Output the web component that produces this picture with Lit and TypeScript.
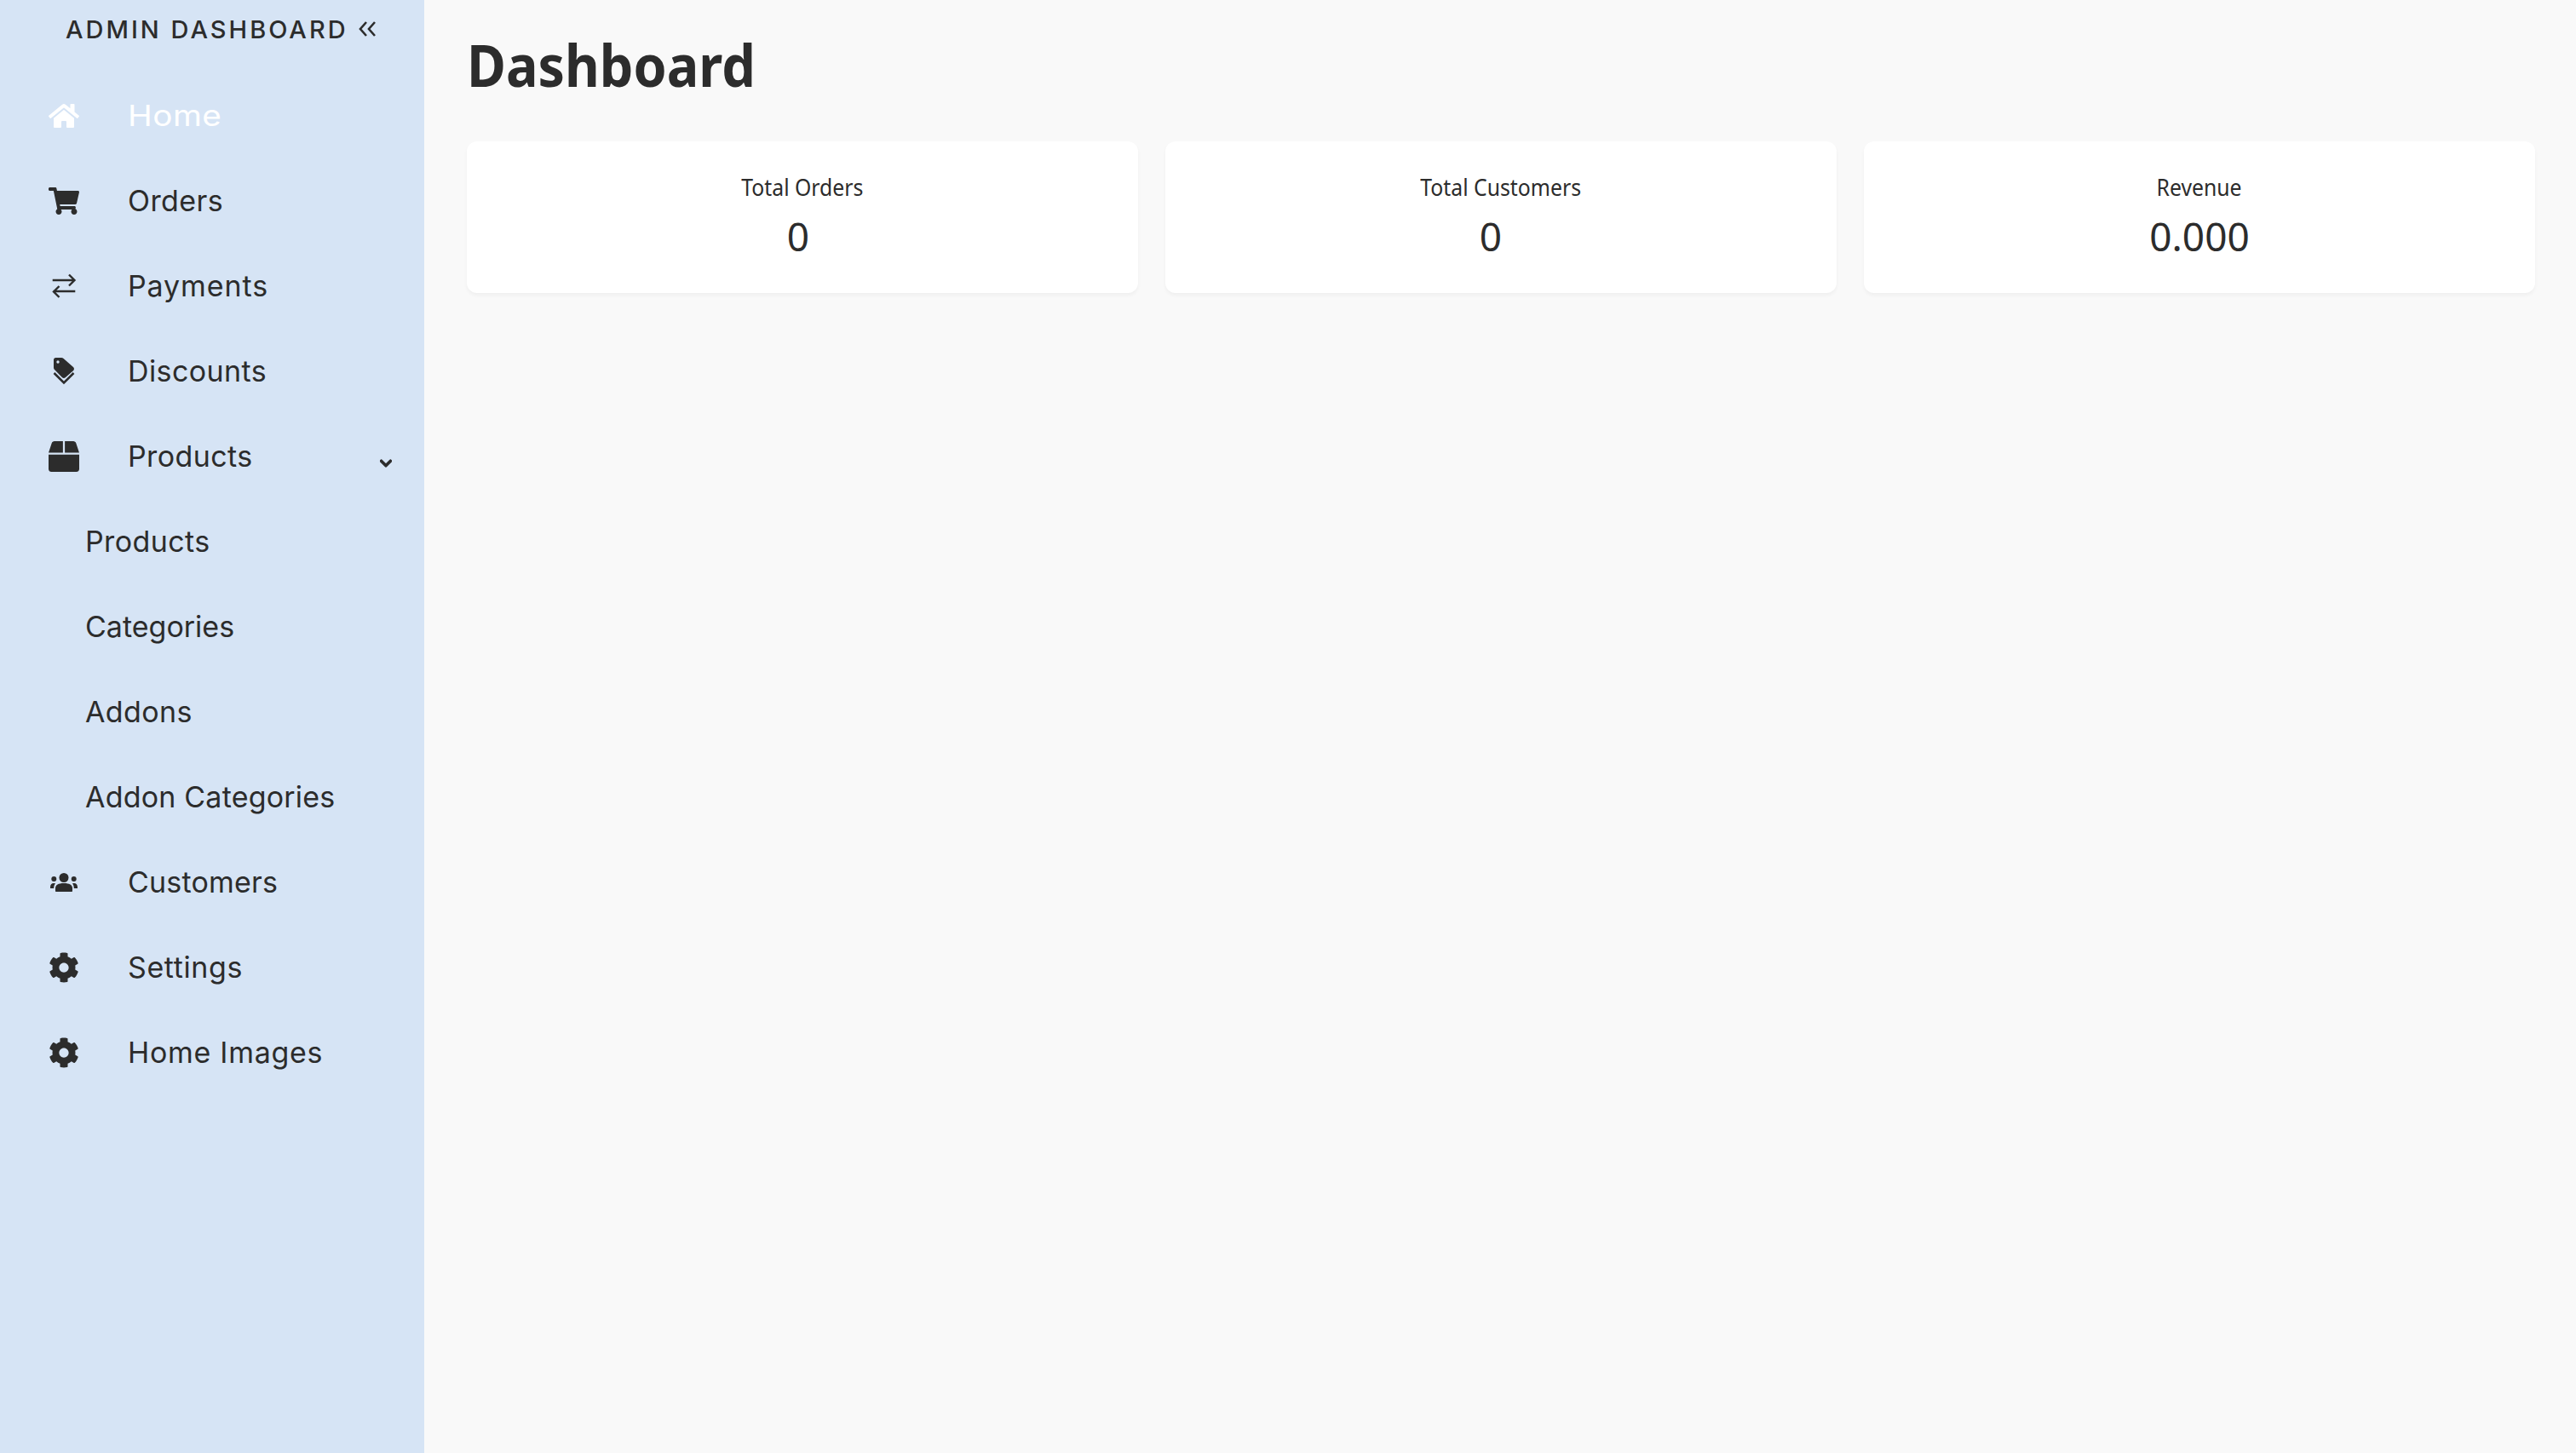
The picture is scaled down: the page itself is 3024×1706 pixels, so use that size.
import { LitElement, html, css } from "lit";
import { customElement } from "lit/decorators.js";

const icons: Record<string, unknown> = {
  home: html`<svg viewBox="0 0 576 512"><path d="M280.37 148.26L96 300.11V464a16 16 0 0 0 16 16l112.06-.29a16 16 0 0 0 15.92-16V368a16 16 0 0 1 16-16h64a16 16 0 0 1 16 16v95.64a16 16 0 0 0 16 16.05L464 480a16 16 0 0 0 16-16V300L295.67 148.26a12.19 12.19 0 0 0-15.3 0zM571.6 251.47L488 182.56V44.05a12 12 0 0 0-12-12h-56a12 12 0 0 0-12 12v72.61L318.47 43a48 48 0 0 0-61 0L4.34 251.47a12 12 0 0 0-1.6 16.9l25.5 31A12 12 0 0 0 45.15 301l235.22-193.74a12.19 12.19 0 0 1 15.3 0L530.9 301a12 12 0 0 0 16.9-1.6l25.5-31a12 12 0 0 0-1.7-16.93z"/></svg>`,
  cart: html`<svg viewBox="0 0 576 512"><path d="M528.12 301.319l47.273-208C578.806 78.301 567.391 64 551.99 64H159.208l-9.166-44.81C147.758 8.021 137.93 0 126.529 0H24C10.745 0 0 10.745 0 24v16c0 13.255 10.745 24 24 24h69.883l70.248 343.435C147.325 417.1 136 435.222 136 456c0 30.928 25.072 56 56 56s56-25.072 56-56c0-15.674-6.447-29.835-16.824-40h209.647C430.447 426.165 424 440.326 424 456c0 30.928 25.072 56 56 56s56-25.072 56-56c0-22.172-12.888-41.332-31.579-50.405l5.517-24.276c3.413-15.018-8.002-29.319-23.403-29.319H218.117l-6.545-32h293.145c11.206 0 20.92-7.754 23.403-18.681z"/></svg>`,
  swap: html`<svg viewBox="0 0 36 36"><path d="M4.700 11H31M24 4.500 30.500 11 24 17.500M31.300 24H5.500M12.500 18 6 24.500 12.500 31" fill="none" stroke="currentColor" stroke-width="2.400"/></svg>`,
  tags: html`<svg viewBox="0 0 36 36"><path d="M6 4.500C6 3 7 2 8.500 2H15c1 0 1.900.4 2.600 1L29 13c1.300 1.200 1.300 3 0 4.200L20 25c-1.200 1.200-3 1.200-4.200 0L7 16c-.7-.6-1-1.500-1-2.500z"/><path d="M6.500 20 18 31.500 29.500 20" fill="none" stroke="currentColor" stroke-width="2.500"/><circle cx="11" cy="7" r="1.700" fill="#d6e4f5"/></svg>`,
  box: html`<svg viewBox="0 0 512 512"><path d="M509.5 184.6L458.9 32.8C452.4 13.2 434.1 0 413.4 0H272v192h238.7c-.4-2.5-.4-5-1.2-7.4zM240 0H98.6c-20.7 0-39 13.2-45.5 32.8L2.5 184.6c-.8 2.4-.8 4.9-1.2 7.4H240V0zM0 224v240c0 26.5 21.5 48 48 48h416c26.5 0 48-21.5 48-48V224H0z"/></svg>`,
  users: html`<svg viewBox="0 0 36 36"><circle cx="18" cy="12.500" r="5.500"/><circle cx="6.300" cy="14" r="3"/><circle cx="29.700" cy="14" r="3"/><path d="M8 28c0 .6.400 1 1 1h18c.6 0 1-.4 1-1v-3c0-4-3.500-6-10-6S8 21 8 25z"/><path d="M2 25v-1.500C2 21 3.500 19 6 19c.8 0 1.500.1 2 .4-1.200 1.300-1.800 3-1.800 5.600zM34 25v-1.500C34 21 32.500 19 30 19c-.8 0-1.500.1-2 .4 1.200 1.300 1.800 3 1.800 5.600z"/></svg>`,
  gear: html`<svg viewBox="0 0 512 512"><path d="M487.4 315.7l-42.6-24.6c4.3-23.2 4.3-47 0-70.2l42.6-24.6c4.9-2.8 7.1-8.6 5.5-14-11.1-35.6-30-67.8-54.7-94.6-3.8-4.1-10-5.1-14.8-2.3L380.8 110c-17.9-15.4-38.5-27.3-60.8-35.1V25.800c0-5.600-3.900-10.500-9.400-11.700-36.700-8.200-74.300-7.800-109.200 0-5.500 1.200-9.400 6.100-9.400 11.700V75c-22.200 7.900-42.800 19.800-60.800 35.100L88.700 85.500c-4.900-2.800-11-1.900-14.800 2.300-24.700 26.700-43.600 58.900-54.700 94.600-1.700 5.400.6 11.200 5.500 14L67.300 221c-4.300 23.200-4.300 47 0 70.200l-42.600 24.600c-4.900 2.800-7.100 8.600-5.500 14 11.100 35.600 30 67.800 54.700 94.600 3.800 4.100 10 5.100 14.800 2.300l42.600-24.600c17.900 15.400 38.500 27.300 60.800 35.100v49.200c0 5.600 3.900 10.500 9.400 11.700 36.700 8.200 74.300 7.800 109.200 0 5.500-1.200 9.400-6.100 9.400-11.700v-49.200c22.200-7.900 42.800-19.800 60.800-35.100l42.600 24.600c4.900 2.800 11 1.900 14.800-2.300 24.700-26.700 43.600-58.900 54.700-94.600 1.500-5.500-.7-11.300-5.600-14.100zM256 336c-44.100 0-80-35.900-80-80s35.900-80 80-80 80 35.900 80 80-35.900 80-80 80z"/></svg>`,
};

const chevron = html`<svg class="caret" viewBox="0 0 448 512"><path stroke="currentColor" stroke-width="36" d="M207.029 381.476L12.686 187.132c-9.373-9.373-9.373-24.569 0-33.941l22.667-22.667c9.357-9.357 24.522-9.375 33.901-.04L224 284.505l154.745-154.021c9.379-9.335 24.544-9.317 33.901.04l22.667 22.667c9.373 9.373 9.373 24.569 0 33.941L240.971 381.476c-9.373 9.372-24.569 9.372-33.942 0z"/></svg>`;

type Item = { label: string; icon?: string; active?: boolean; caret?: boolean; ls?: number; sx?: number };
const items: Item[] = [
  { label: "Home", icon: "home", active: true, sx: 1.14 },
  { label: "Orders", icon: "cart" },
  { label: "Payments", icon: "swap", ls: 0.9 },
  { label: "Discounts", icon: "tags" },
  { label: "Products", icon: "box", caret: true },
  { label: "Products" },
  { label: "Categories", ls: 0 },
  { label: "Addons" },
  { label: "Addon Categories", ls: 0.2 },
  { label: "Customers", icon: "users", ls: 0.2 },
  { label: "Settings", icon: "gear", ls: 0.6 },
  { label: "Home Images", icon: "gear", ls: 0.7 },
];

const cards = [
  { label: "Total Orders", value: "0", shift: 5 },
  { label: "Total Customers", value: "0", shift: 12 },
  { label: "Revenue", value: "0.000", shift: 0 },
];

const txtStyle = (i: Item) =>
  (i.ls !== undefined ? `letter-spacing:${i.ls}px;` : "") + (i.sx ? `transform:scaleX(${i.sx});` : "");

@customElement("app-root")
export class AppRoot extends LitElement {
  static styles = css`
    :host { display: flex; width: 100%; min-height: 1706px; color: #2c2c2c; background: #f9f9f9; }
    .side { width: 498px; flex: none; background: #d6e4f5; font-family: Inter, sans-serif; }
    .head { display: flex; align-items: center; height: 68px; margin-bottom: 18px; padding-left: 77px; gap: 12px; font-size: 29px; font-weight: 500; letter-spacing: 3px; white-space: nowrap; }
    .head svg { width: 20px; height: 18px; }
    .row { display: flex; align-items: center; height: 100px; padding-left: 57px; font-size: 34px; letter-spacing: .4px; font-weight: 400; white-space: nowrap; }
    .row.active { color: #fff; }
    .row.sub { padding-left: 100px; }
    .txt { margin-bottom: 2px; transform-origin: left; }
    .ico { width: 36px; height: 36px; margin-right: 57px; flex: none; display: flex; }
    .ico svg { width: 100%; height: 100%; fill: currentColor; }
    .caret { width: 14px; height: 16px; fill: currentColor; margin-left: auto; margin-right: 38px; margin-top: 16px; }
    .main { flex: 1; padding: 0 48px 0 50px; font-family: "Noto Sans", sans-serif; }
    h1 { margin: 0; height: 166px; box-sizing: border-box; padding-top: 32px; font-size: 68px; line-height: 88px; font-weight: 700; transform: scaleX(.923); transform-origin: left; }
    .cards { display: grid; grid-template-columns: repeat(3, 788px); gap: 32px; }
    .card { height: 178px; background: #fff; border-radius: 12px; box-shadow: 0 3px 4px rgba(0,0,0,.04); display: flex; flex-direction: column; align-items: center; }
    .label { margin-top: 33px; font-size: 28px; line-height: 40px; transform: scaleX(.885); }
    .value { margin-top: 7px; font-size: 46px; line-height: 62px; font-weight: 400; }
  `;
  render() {
    return html`
      <aside class="side">
        <div class="head">ADMIN DASHBOARD
          <svg viewBox="0 0 20 18"><path d="M9 1 2 9l7 8M19 1 12 9l7 8" fill="none" stroke="currentColor" stroke-width="2.600"/></svg>
        </div>
        ${items.map(
          (i) => html`<div class="row ${i.active ? "active" : ""} ${i.icon ? "" : "sub"}">
            ${i.icon ? html`<span class="ico">${icons[i.icon]}</span>` : ""}
            <span class="txt" style=${txtStyle(i)}>${i.label}</span>
            ${i.caret ? chevron : ""}
          </div>`
        )}
      </aside>
      <main class="main">
        <h1>Dashboard</h1>
        <section class="cards">
          ${cards.map(
            (c) => html`<div class="card">
              <div class="label">${c.label}</div>
              <div class="value" style="margin-right:${c.shift * 2}px">${c.value}</div>
            </div>`
          )}
        </section>
      </main>
    `;
  }
}
